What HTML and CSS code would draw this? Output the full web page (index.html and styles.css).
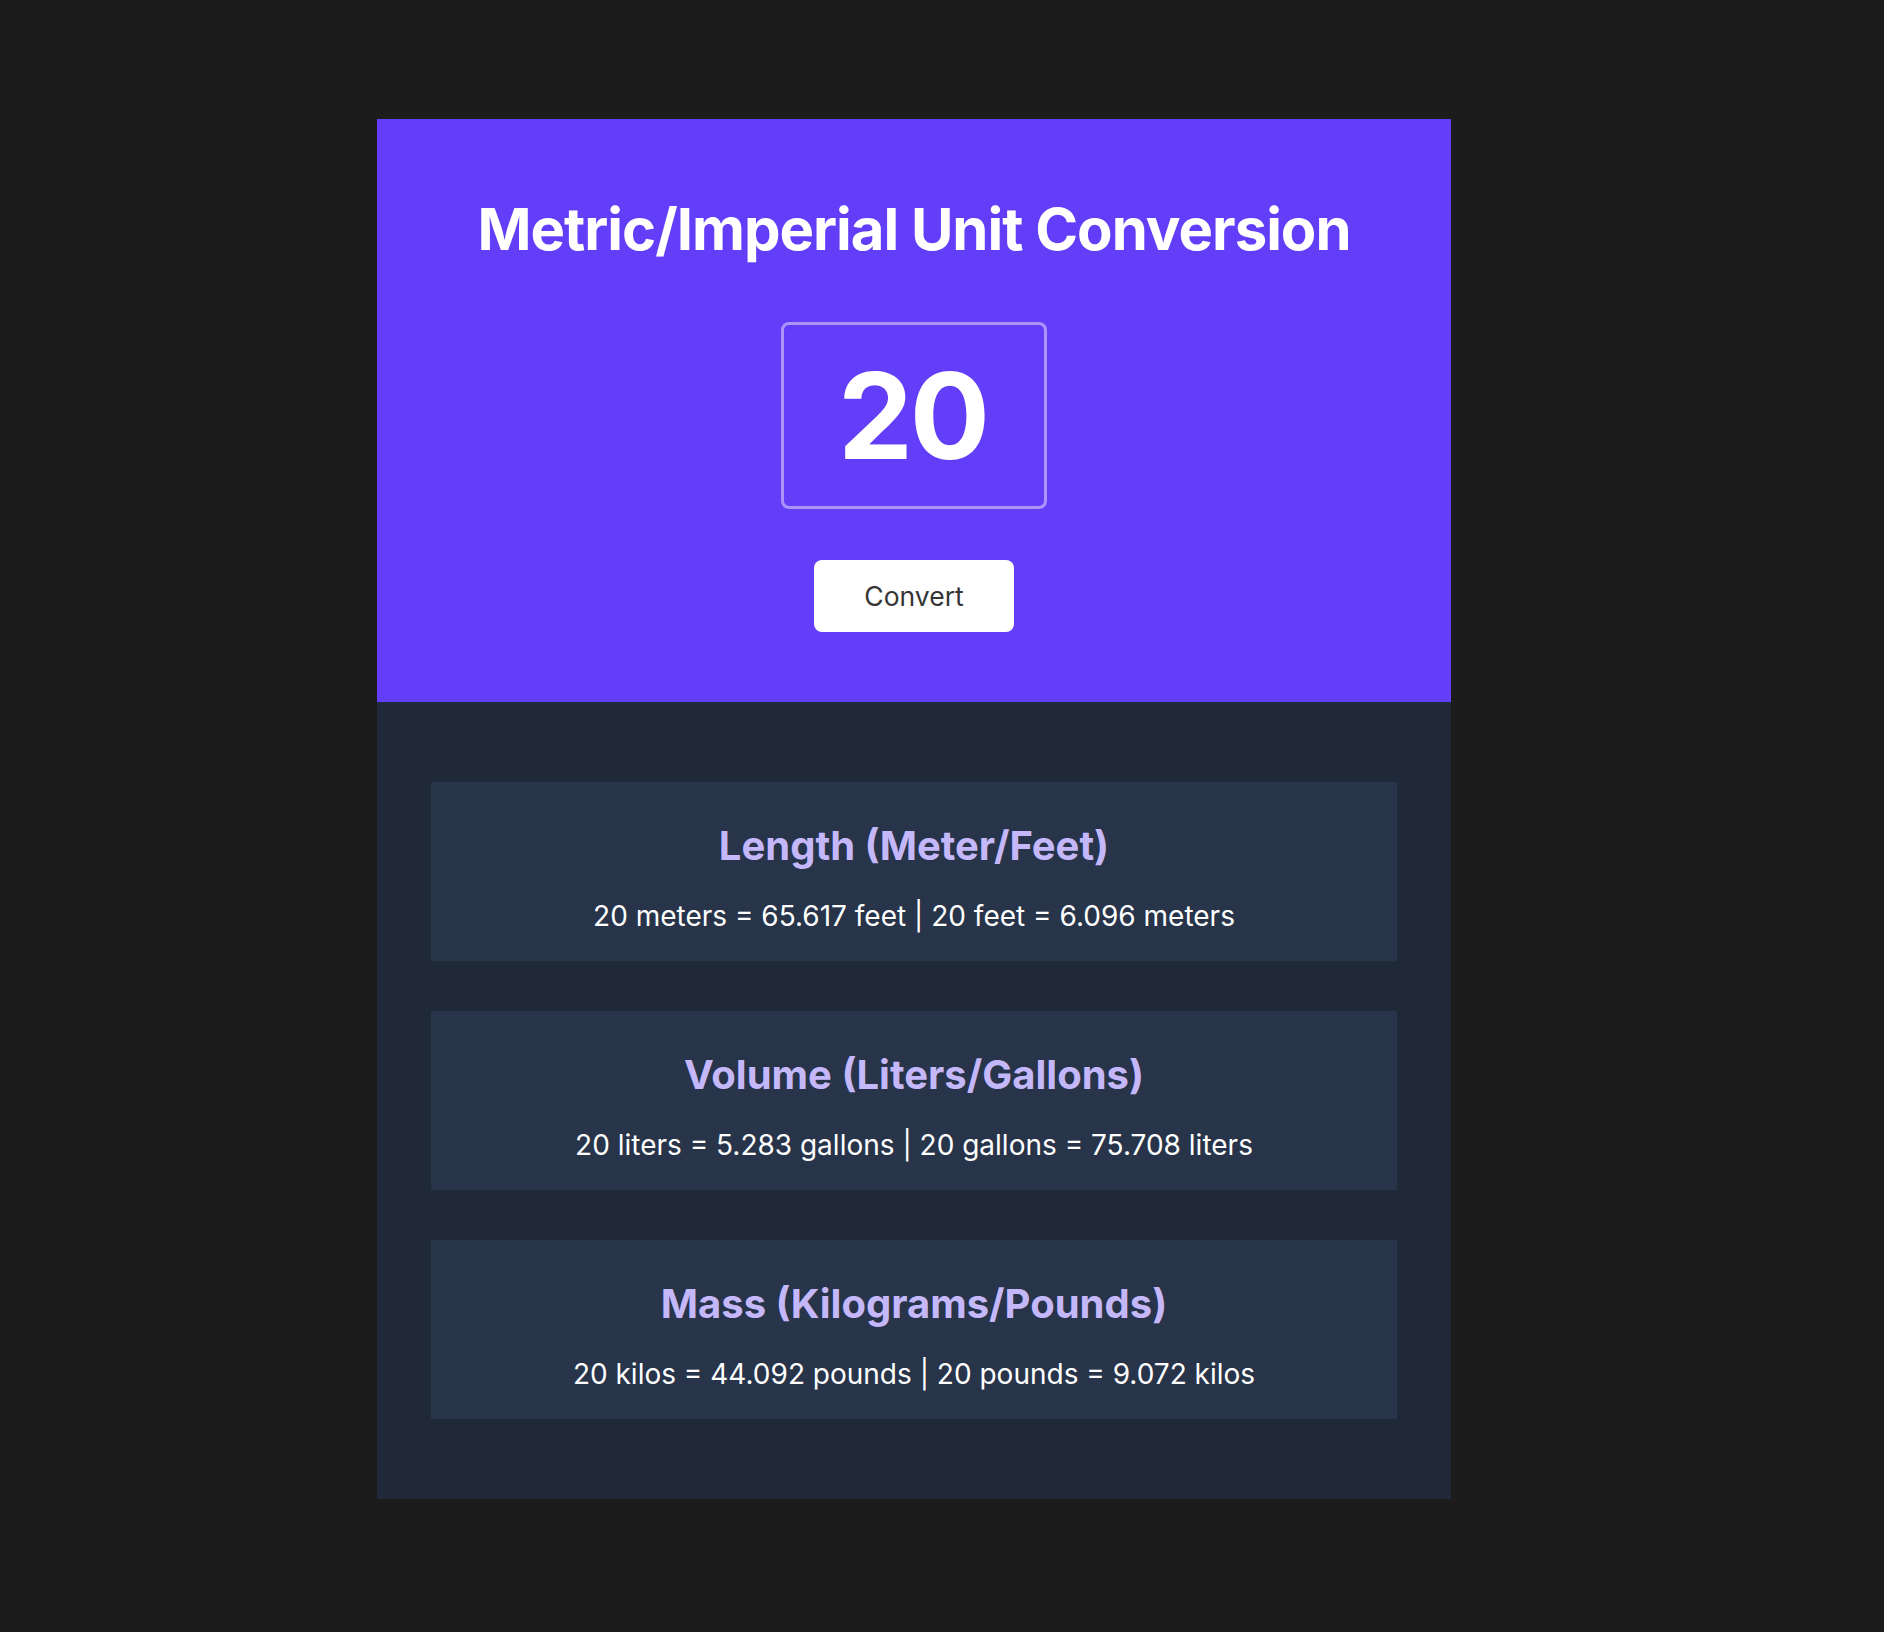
FILE: index.html
```html
<!DOCTYPE html>
<html lang="en">
<head>
<meta charset="utf-8">
<title>Metric/Imperial Unit Conversion</title>
<link rel="stylesheet" href="styles.css">
</head>
<body>
<main class="app">
  <section class="hero">
    <h1 class="hero-title">Metric/Imperial Unit Conversion</h1>
    <input class="num-input" type="text" value="20">
    <button class="convert-btn">Convert</button>
  </section>
  <section class="results">
    <div class="card">
      <h2 class="card-title">Length (Meter/Feet)</h2>
      <p class="card-text">20 meters = 65.617 feet | 20 feet = 6.096 meters</p>
    </div>
    <div class="card">
      <h2 class="card-title">Volume (Liters/Gallons)</h2>
      <p class="card-text">20 liters = 5.283 gallons | 20 gallons = 75.708 liters</p>
    </div>
    <div class="card">
      <h2 class="card-title">Mass (Kilograms/Pounds)</h2>
      <p class="card-text">20 kilos = 44.092 pounds | 20 pounds = 9.072 kilos</p>
    </div>
  </section>
</main>
</body>
</html>
```

FILE: styles.css
```css
* { box-sizing: border-box; }
html, body { margin: 0; padding: 0; }
body {
  background: #1c1c1c;
  font-family: Inter, "Noto Sans", sans-serif;
  min-height: 1632px;
}
.app {
  width: 1074px;
  margin: 119px 0 0 377px;
}
.hero {
  background: #633ef9;
  display: flex;
  flex-direction: column;
  align-items: center;
  padding: 75px 0 70px;
}
.hero-title {
  margin: 0;
  font-size: 58px;
  font-weight: 700;
  color: #ffffff;
  line-height: 70px;
  letter-spacing: -1px;
}
.num-input {
  margin-top: 58px;
  width: 266px;
  height: 187px;
  background: transparent;
  border: 3px solid rgba(255,255,255,0.45);
  border-radius: 8px;
  color: #ffffff;
  font-family: Inter, sans-serif;
  font-size: 119px;
  font-weight: 700;
  letter-spacing: -3px;
  text-indent: -3px;
  text-align: center;
  outline: none;
  padding: 0;
}
.convert-btn {
  margin-top: 51px;
  width: 200px;
  height: 72px;
  background: #ffffff;
  border: none;
  border-radius: 8px;
  color: #353535;
  font-family: Inter, sans-serif;
  font-size: 26.5px;
  font-weight: 400;
}
.results {
  background: #1f2937;
  padding: 80px 54px;
  display: flex;
  flex-direction: column;
  gap: 50px;
}
.card {
  background: #273449;
  height: 179px;
  padding-top: 40px;
  text-align: center;
}
.card-title {
  margin: 0;
  font-size: 40px;
  line-height: 48px;
  font-weight: 700;
  color: #c4b8fb;
}
.card-text {
  margin: 29px 0 0;
  font-size: 28px;
  line-height: 34px;
  color: #ffffff;
}
```
